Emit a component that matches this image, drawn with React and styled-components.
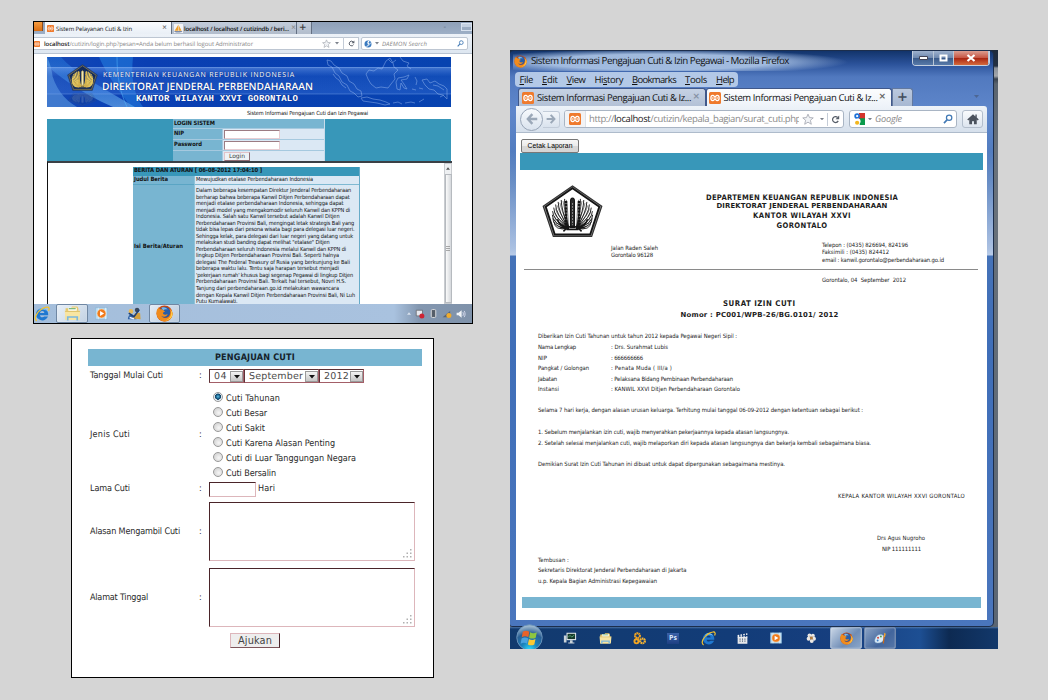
import React, { useLayoutEffect, useRef, useState } from "react";
import styled, { createGlobalStyle, css } from "styled-components";

const tahoma = `"DejaVu Sans Condensed", "DejaVu Sans", sans-serif`;
const verdana = `"DejaVu Sans", sans-serif`;
const segoe = `"Open Sans", "Noto Sans", sans-serif`;

const Global = createGlobalStyle`
  * { box-sizing: border-box; }
  html, body { margin: 0; background: #d5d5d5; }
  body { font-family: ${tahoma}; color: #111; text-rendering: geometricPrecision; }
`;

/* ---------- text that is tracked to an exact measure ---------- */
const FitSpan = styled.span`
  display: inline-block;
  flex: none;
  align-self: center;
  justify-self: start;
  white-space: pre;
  line-height: 1;
  padding-top: ${(p) => (p.$font ? 0 : "0.2em")};
  font-family: ${(p) => p.$font || "inherit"};
  font-size: ${(p) => (p.$size ? `${p.$size}px` : "inherit")};
  font-weight: ${(p) => (p.$bold ? 700 : p.$weight || "inherit")};
  font-style: ${(p) => (p.$italic ? "italic" : "inherit")};
  color: ${(p) => p.$color || "inherit"};
`;

function Fit({ w, children, ...rest }) {
  const ref = useRef(null);
  const [spacing, setSpacing] = useState(0);
  useLayoutEffect(() => {
    const el = ref.current;
    const count = el.textContent.length;
    setSpacing((w - el.getBoundingClientRect().width) / count);
  }, [w]);
  return (
    <FitSpan ref={ref} style={{ letterSpacing: `${spacing}px` }} {...rest}>
      {children}
    </FitSpan>
  );
}

/* ---------- desk ---------- */
const Desk = styled.main`
  display: flex;
  width: 1048px;
  height: 700px;
  background: #d5d5d5;
  overflow: hidden;
`;
const LeftColumn = styled.div`
  display: flex;
  flex-direction: column;
  width: 477px;
  padding: 21px 0 0 33px;
`;

/* ---------- icons ---------- */
const Svg = styled.svg`
  display: block;
  flex: none;
`;
const Icon = ({ s = 16, w, h, box = "0 0 16 16", children }) => (
  <Svg width={w || s} height={h || s} viewBox={box} fill="none">{children}</Svg>
);

const Xampp = ({ s }) => (
  <Icon s={s}>
    <rect width="16" height="16" rx="2" fill="#ef7a2d" />
    <path d="M5 4.500c2 0 2 2 3 2s1-2 3-2 2.500 1.500 2.500 3.500-1 3.500-2.500 3.500c-2 0-2-2-3-2s-1 2-3 2-2.500-1.500-2.500-3.500S3.500 4.500 5 4.500z" stroke="#fff" strokeWidth="1.700" />
    <path d="M5 7v2M11 7v2M6 8h4" stroke="#fff" strokeWidth="1.300" />
  </Icon>
);
const Firefox = ({ s }) => (
  <Icon s={s}>
    <circle cx="8" cy="8" r="7.500" fill="#c9470e" />
    <circle cx="8.300" cy="6.800" r="5.200" fill="#2a5ea8" />
    <path d="M5 2.500c3-1 5 0 6 2-2-1-4 0-4 1z" fill="#7db7e5" />
    <path d="M.8 5c.6-1.600 1.500-2 1.500-3 .8.800 1 1.500 1.700 2 1.500-.3 2.500.4 2.800 1L8.500 6 6.500 7.200c0 1.600 1.800 2.600 4.500 1.300-.8 3-4.500 3-6 1.500C7 13.800 13 13 13.500 7.500c.2-2-.5-3.500-1.200-4.500C15 4.500 16 7 15.500 9.500 14.500 13.500 11 16 7.500 15.500 2 15-.5 9.500.8 5z" fill="#f08b1d" />
    <path d="M13.800 5c1.500 4-.5 8.500-5 9.500 4-.2 7-3 6.600-6.700-.2-1.200-.8-2.200-1.600-2.800z" fill="#ffd04a" />
  </Icon>
);
const Explorer = ({ s }) => (
  <Icon s={s}>
    <path d="M1.500 3h5l1-1.500h5l1 1.500v11h-12z" fill="#e9c869" />
    <path d="M4 2.500h8v4H4z" fill="#fff" />
    <path d="M4.500 3.500H11" stroke="#61a85a" />
    <path d="M.7 5.500h14.600l-.7 8.500H1.400z" fill="#f8e5a2" />
    <path d="M1 6h14" stroke="#d4b353" strokeWidth=".7" />
    <path d="M3.500 14.500v-3.200h9v3.200" stroke="#7bb8de" strokeWidth="1.600" />
  </Icon>
);
const IE = ({ s }) => (
  <Icon s={s}>
    <path d="M14 10.500c-1 2.400-3.200 3.900-5.800 3.900A6.200 6.200 0 0 1 2 8.200C2 4.900 4.700 2.200 8.200 2.200c3.700 0 6.300 3 6 7H6c.2 1.400 1 2.100 2.300 2.100.9 0 1.500-.3 1.900-.8zM6 7h4.300C10.200 5.800 9.400 5.100 8.200 5.100S6.200 5.800 6 7z" fill="#1f78d0" />
    <path d="M4 3.900C5 3 6.500 2.300 8.200 2.300c2 0 3.800 1 4.800 2.600-2.500-1.500-6-1.500-9-1z" fill="#7cc6fb" />
    <path d="M2.800 14.800C-1 13 3 5.500 8.500 2.500c3-1.700 6-2 6.500-.5.300.8 0 1.800-.5 2.800" stroke="#f2c12e" strokeWidth="1.300" />
  </Icon>
);
const Player = ({ s }) => (
  <Icon s={s}>
    <path d="M.5 1h15v14h-15z" fill="#b9dbf2" stroke="#7faed0" strokeWidth=".6" />
    <path d="M4 1v14M13 1v14" stroke="#e6f4fc" />
    <circle cx="8" cy="8" r="5.400" fill="#f07a1b" stroke="#ffd6a6" strokeWidth=".7" />
    <path d="M6.200 5v6l5-3z" fill="#fff" />
  </Icon>
);
const Messenger = ({ s }) => (
  <Icon s={s}>
    <circle cx="4.500" cy="5" r="2.600" fill="#e9b955" />
    <path d="M1 14c0-5 3-6.500 6-5l4 5z" fill="#2f62a6" />
    <circle cx="11.500" cy="3.500" r="2.600" fill="#3b4a5c" />
    <path d="M7 13c0-5 3-7.500 8-6l.5 7z" fill="#d5a03b" />
    <path d="M2 7l6 4 6-8" stroke="#1e3f77" strokeWidth="1.800" />
    <path d="M3 12l5 1.500" stroke="#f5f5ff" strokeWidth="1.600" />
  </Icon>
);
const Monitor = ({ s }) => (
  <Icon s={s}>
    <path d="M4 2h11v8.500H4z" fill="#dfe6ea" />
    <path d="M5.200 3.200h8.600v6H5.200z" fill="#173a2c" />
    <path d="M6 7l2-2 2 2 3-2.500" stroke="#67c58c" strokeWidth=".8" />
    <path d="M1 5h3v8H1zM8 10.500h3V13H8zM6 13h7v1.300H6z" fill="#c9d3da" />
  </Icon>
);
const Gears = ({ s }) => (
  <Icon s={s}>
    <circle cx="5.500" cy="4.500" r="3" stroke="#f2a521" strokeWidth="2.600" strokeDasharray="2 .5" />
    <circle cx="4.300" cy="11.500" r="2.500" stroke="#f2a521" strokeWidth="2.400" />
    <circle cx="11.700" cy="11" r="2.900" stroke="#f7b532" strokeWidth="2.700" strokeDasharray="1.800 .5" />
  </Icon>
);
const PsTile = styled.div`
  display: grid;
  place-items: center;
  width: 12px;
  height: 11px;
  background: linear-gradient(#3b62a8, #1d3f82);
  color: #dbe9fb;
  font: 700 7px/1 "Open Sans", sans-serif;
`;
const Clapper = ({ s }) => (
  <Icon s={s}>
    <path d="M2 6h12v8.500H2z" fill="#e5e7eb" />
    <path d="M2 4.500l12-2M2 6h12" stroke="#f4f4f4" strokeWidth="1.800" strokeDasharray="2 1.500" />
    <path d="M5 8v5M8 8v5M11 8v5" stroke="#4a6177" strokeWidth="1.300" strokeDasharray="1.500 1" />
  </Icon>
);
const Flower = ({ s }) => (
  <Icon s={s}>
    <g fill="#ece9e4">
      <circle cx="6" cy="4.500" r="2.600" /><circle cx="10.500" cy="5" r="2.600" /><circle cx="12" cy="9" r="2.600" />
      <circle cx="9" cy="12" r="2.600" /><circle cx="4.800" cy="9" r="2.600" />
    </g>
    <circle cx="8.500" cy="8" r="2" fill="#b97f3c" />
    <path d="M6 5l1.500 2M11 5.500L9.500 7M11 10l-1.500-1" stroke="#8b6d4f" strokeWidth=".8" />
  </Icon>
);
const Paint = ({ s }) => (
  <Icon s={s}>
    <path d="M8 3c4 0 5 3 4 6s-4 5-8 4.500S.5 10 2 7s3.500-4 6-4z" fill="#dcecf8" stroke="#80a7ca" strokeWidth=".6" />
    <circle cx="5" cy="7" r="1.300" fill="#cf4a43" /><circle cx="8.500" cy="5.500" r="1.200" fill="#4c9a50" />
    <circle cx="4.500" cy="10.500" r="1.200" fill="#417fc7" />
    <path d="M11.500 14l1-9" stroke="#c96a1b" strokeWidth="1.500" /><path d="M12 6l.5-5 2 1-1 4z" fill="#f0a02c" />
  </Icon>
);
const Orb = () => (
  <Icon s={27} box="0 0 28 28">
    <defs>
      <radialGradient id="orb" cx=".5" cy="1" r=".95">
        <stop offset="0" stopColor="#2fe0ff" /><stop offset=".35" stopColor="#1a83bd" />
        <stop offset=".7" stopColor="#2a5f94" /><stop offset="1" stopColor="#9fb9cf" />
      </radialGradient>
    </defs>
    <circle cx="14" cy="14" r="13.200" fill="url(#orb)" stroke="#6a94bb" />
    <path d="M7 8c2-1.500 4.500-1.500 6.800 0l-1 5.700c-2-1.400-4.500-1.400-6.800 0z" fill="#e8632a" />
    <path d="M14.600 8.500c2.300 1.300 4.600 1.300 7 0l-1.200 5.700c-2.300 1.200-4.500 1.200-6.800 0z" fill="#8ec63f" />
    <path d="M5.800 15c2.300-1.300 4.500-1.300 6.800 0l-1 5.400c-2.300-1.400-4.500-1.400-6.800 0z" fill="#4aa3e0" />
    <path d="M13.400 15.500c2.300 1.300 4.500 1.300 6.800 0L19 21.200c-2.300 1.200-4.500 1.200-6.700 0z" fill="#fbc932" />
  </Icon>
);
const Star = ({ s }) => (
  <Icon s={s}><path d="M8 1.500l2 4.600 5 .4-3.800 3.200L12.400 15 8 12.200 3.600 15l1.200-5.300L1 6.500l5-.4z" fill="#f1f3f6" stroke="#a9adb5" strokeWidth="1.200" /></Icon>
);
const Caret = ({ s = 5, color = "#7c828c" }) => (
  <Icon w={s} h={s * 0.6} box="0 0 10 6"><path d="M0 0h10L5 6z" fill={color} /></Icon>
);
const Reload = ({ s }) => (
  <Icon s={s}>
    <path d="M12.800 10.500A5.300 5.300 0 1 1 11.500 4" stroke="#565d68" strokeWidth="2.200" />
    <path d="M14.500 1v6.500H8z" fill="#565d68" />
  </Icon>
);
const Magnifier = ({ s }) => (
  <Icon s={s}>
    <circle cx="9.800" cy="6" r="4.300" stroke="#4179b5" strokeWidth="2" />
    <path d="M6.500 9.300L1.500 14.500" stroke="#4179b5" strokeWidth="2.600" />
  </Icon>
);
const Home = ({ s }) => (
  <Icon s={s}><path d="M8 1.500L.3 8.600l1.500 1.300L3 8.800V15h3.700v-4h2.600v4H13V8.800l1.200 1.100 1.500-1.300-2.700-2.500V2h-1.800v2.500z" fill="#4b525d" /></Icon>
);
const Arrow = ({ s, flip }) => (
  <Icon s={s}>
    <path transform={flip ? "rotate(180 8 8)" : undefined} d="M8.500 1.500L2.500 8l6 6.500M3 8h12" stroke="#9ba8b8" strokeWidth="3.200" />
  </Icon>
);
const GoogleMark = ({ s }) => (
  <Icon s={s}>
    <path d="M0 0h16v16H0z" fill="#fff" />
    <path d="M8 0h8v10H8z" fill="#d4342b" /><path d="M9 7h7v9H9z" fill="#0b9a4b" />
    <circle cx="5.500" cy="4" r="3.800" fill="#1e72d8" /><circle cx="5.500" cy="4" r="1.500" fill="#fff" />
    <circle cx="6.500" cy="11" r="3.600" fill="#fff" /><circle cx="5.500" cy="13" r="2.800" fill="#f3b61d" />
  </Icon>
);
const Daemon = ({ s }) => (
  <Icon s={s}><circle cx="8" cy="8" r="7" fill="#3a7ac0" /><path d="M8 2l-2 5h2.500L6 14l5.500-8H8.800L11 2z" fill="#fff" /><path d="M1 13C6 14 14 9 15 3" stroke="#fff" strokeWidth="1.300" /></Icon>
);
const PhpMyAdmin = ({ s }) => (
  <Icon s={s}>
    <path d="M0 0h16v16H0z" fill="#f2f3f5" />
    <path d="M1 12L8 1v11zM9 3l4.500 9H9z" fill="#f0a12c" />
    <path d="M0 12.500h15c-1 2-3 2.500-5 2.500H4c-2 0-3-1-4-2.500z" fill="#7d8ba8" />
  </Icon>
);

/* pentagon crest; the colour version is for the web banner, the outlined one for letters */
const Crest = ({ w, h, colour }) => {
  const ink = colour ? "#c9a544" : "#151515";
  const feathers = [0, 1, 2, 3, 4, 5, 6, 7, 8];
  return (
    <Icon w={w} h={h} box="0 0 60 52">
      <path d="M30 1L59 21 49 51H11L1 21z" fill={colour ? "#152e62" : "#8d8d8d"} stroke={colour ? "#2c4474" : "#333"} strokeWidth="1.200" />
      <path d="M30 3.200L56.500 21.600 47.500 49h-35L3.500 21.600z" fill={colour ? "#132b5b" : "#fff"} stroke={ink} strokeWidth={colour ? 1 : 1.800} />
      {feathers.map((i) => {
        const a = Math.PI * (0.56 + i * 0.075);
        const x = 25 + Math.cos(a) * 15;
        const y = 29 - Math.sin(a) * 15.500;
        return (
          <g key={i} stroke={colour ? "#e4c65e" : ink} strokeWidth={colour ? 2.400 : 0.9}>
            <path d={`M26 43Q${x} ${y + 9} ${x} ${y}`} />
            <path d={`M34 43Q${60 - x} ${y + 9} ${60 - x} ${y}`} />
            {!colour && <path d={`M26 41Q${x + 3} ${y + 8} ${x + 1.800} ${y + 1}M34 41Q${57 - x} ${y + 8} ${58.200 - x} ${y + 1}`} strokeWidth=".5" />}
          </g>
        );
      })}
      <path d="M23.500 40V15M36.500 40V15" stroke={ink} strokeWidth="2.600" strokeDasharray="2.500 .6" />
      <path d="M28 42V16c0-4 4-4 4 0v26z" fill={colour ? "#f0e8b8" : "#2b2b2b"} stroke={ink} />
      {!colour && <path d="M30 18v22" stroke="#bbb" strokeWidth=".8" strokeDasharray="1.500 1.500" />}
      <path d="M15 34c2 6 7 9 15 7 8 2 13-1 15-7M18 42l6 1-3 3M42 42l-6 1 3 3M24 44h12" stroke={ink} strokeWidth="1.600" />
    </Icon>
  );
};

/* ---------- login window ---------- */
const LoginWindow = styled.section`
  width: 440px;
  height: 303px;
  border: 1px solid #000;
  background: #fff;
  display: flex;
  flex-direction: column;
  overflow: hidden;
`;
const SmallTabs = styled.div`
  display: flex;
  align-items: stretch;
  height: 12px;
  flex: none;
  background: linear-gradient(#8fa0b8, #9dafc6);
`;
const OrangeButton = styled.div`
  width: 9px;
  height: 9px;
  margin-right: 2px;
  background: linear-gradient(#f59b3f, #d86b10);
  border-right: 1px solid #8b4b1d;
`;
const SmallTab = styled.div`
  display: flex;
  align-items: center;
  justify-content: space-between;
  gap: 2px;
  width: ${(p) => p.$w}px;
  padding: 0 4px 0 2px;
  font: 6px ${segoe};
  background: ${(p) => (p.$on ? "linear-gradient(#fafcfe,#e9eff6)" : "linear-gradient(#c2ccda,#b2bdcc)")};
  border-right: 1px solid #647083;
`;
const TabTitle = styled.div`
  display: flex;
  align-items: center;
  gap: ${(p) => p.$gap || 2}px;
`;
const Close = styled.span`
  color: ${(p) => p.$color || "#666"};
  font: 600 ${(p) => p.$size || 8}px/1 ${verdana};
`;
const CornerHint = styled.div`
  display: flex;
  flex: 1;
  align-items: flex-start;
  justify-content: flex-end;
  gap: 15px;
  color: #56657a;
  font: 7px/10px ${verdana};
`;
const CornerButton = styled.div`
  width: 11px;
  height: 8px;
  margin-top: 1px;
  border: 1px solid #d8e2ef;
  background: linear-gradient(#c4d0e0 50%, #9bacc2 50%);
`;
const SmallNav = styled.div`
  display: flex;
  align-items: center;
  gap: 2px;
  height: 20px;
  flex: none;
  padding-right: 3px;
  background: linear-gradient(#edf2f8, #dde6f0);
  border-bottom: 1px solid #b8c3d1;
`;
const SmallField = styled.div`
  display: flex;
  align-items: center;
  gap: ${(p) => p.$gap || 3}px;
  height: 13px;
  width: ${(p) => p.$w}px;
  padding: 0 3px 0 ${(p) => p.$pl || 0}px;
  background: #fff;
  border: 1px solid #bdc6d2;
  border-left-width: ${(p) => (p.$open ? 0 : 1)}px;
  border-radius: ${(p) => (p.$open ? "0" : "2px")};
`;
const Host = styled.span`
  color: #1c1c1c;
  font-weight: ${(p) => p.$weight || 400};
`;
const Spring = styled.div`flex: 1;`;
const Separator = styled.div`
  flex: none;
  width: 1px;
  height: 13px;
  background: #c4ccd7;
`;

const SitePage = styled.div`
  flex: 1;
  min-height: 0;
  width: 418px;
  padding: 3px 0 0 13px;
  display: flex;
  flex-direction: column;
`;
const Banner = styled.header`
  position: relative;
  flex: none;
  width: 404px;
  height: 50px;
  overflow: hidden;
  display: flex;
`;
const BannerArt = styled.div`
  position: absolute;
  inset: 0;
`;
const BannerCrest = styled.div`
  position: relative;
  width: 55px;
  padding: 5px 0 0 20px;
`;
const Reflection = styled.div`
  transform: scaleY(-0.5);
  transform-origin: top;
  margin-top: 13px;
  opacity: 0.16;
`;
const BannerText = styled.div`
  position: relative;
  color: #fff;
  padding-top: 14px;
  display: flex;
  flex-direction: column;
`;
const BannerLine = styled.div`
  height: ${(p) => p.$h}px;
  padding-left: ${(p) => p.$pl || 0}px;
  display: flex;
  align-items: center;
  text-shadow: 0 0 1px #06226e;
`;
const Tagline = styled.div`
  display: flex;
  align-items: center;
  justify-content: flex-end;
  height: 12px;
  flex: none;
  padding-top: 2px;
  width: 321px;
`;
const LoginBand = styled.div`
  flex: none;
  display: grid;
  grid-template-columns: 126px 152px 126px;
  width: 404px;
  height: 42px;
  background: #3897b9;
`;
const LoginTable = styled.form`
  grid-column: 2;
  display: grid;
  grid-template-columns: 49px 1fr;
  grid-template-rows: 9px 10px 10px 10px;
  gap: 1px;
  margin: 0;
  background: #a5c9df;
  border-right: 1px solid #c9dceb;
`;
const LoginLabel = styled.div`
  display: flex;
  align-items: center;
  padding: 1px 0 0 1px;
  grid-column: ${(p) => (p.$wide ? "1 / 3" : "auto")};
  background: #78b5d1;
`;
const LoginCell = styled.div`
  display: flex;
  align-items: center;
  padding-left: 1px;
  background: #dbe8f4;
`;
const TinyInput = styled.div`
  width: 56px;
  height: 9px;
  background: #fff;
  border: 1px solid;
  border-color: #9c7c83 #e8cdd2 #e8cdd2 #9c7c83;
`;
const TinyButton = styled.button`
  width: 26px;
  height: 9px;
  margin: 0;
  padding: 0;
  display: flex;
  align-items: center;
  justify-content: center;
  background: #eef2f6;
  border: 1px solid;
  border-color: #e2c3c9 #8e6c74 #8e6c74 #e2c3c9;
  color: #444;
`;
const Frame = styled.div`
  flex: 1;
  min-height: 0;
  display: flex;
  width: 405px;
  border-top: 2px solid #3b4046;
  border-left: 1px solid #111;
  overflow: hidden;
`;
const NewsTable = styled.div`
  display: grid;
  grid-template-columns: 61px 165px;
  grid-template-rows: 9px 9px 1fr;
  width: 227px;
  margin: 4px 0 0 85px;
  border-right: 1px solid #66abc8;
`;
const NewsHead = styled.div`
  grid-column: 1 / 3;
  display: flex;
  align-items: center;
  padding-left: 1px;
  background: #3897b9;
`;
const NewsLabel = styled.div`
  display: flex;
  align-items: center;
  padding: ${(p) => (p.$down ? "5px 0 0 1px" : "0 0 0 1px")};
  background: #78b5d1;
  border-bottom: 1px solid #5aa5c4;
`;
const NewsCell = styled.div`
  display: flex;
  flex-direction: column;
  align-items: flex-start;
  padding: ${(p) => (p.$body ? "3px 0 0 1px" : "1px 0 0 1px")};
  background: #dbe8f4;
  border-bottom: 1px solid #7fb9d2;
  border-left: 1px solid #8fc3d9;
`;
const NewsLine = styled.div`
  height: ${(p) => p.$h || 6.540}px;
  flex: none;
  display: flex;
  align-items: center;
`;
const Scrollbar = styled.div`
  display: flex;
  flex-direction: column;
  align-items: center;
  gap: 1px;
  width: 8px;
  margin-left: auto;
  background: #eef0f2;
  border: 1px solid #c9ccd0;
  padding-top: 3px;
`;
const Thumb = styled.div`
  display: grid;
  place-items: center;
  flex: 1;
  width: 7px;
  margin-top: 3px;
  padding-top: 20px;
  border: 1px solid #b6babf;
  background: linear-gradient(90deg, #fafafa, #d5d8dc);
`;
const Taskbar = styled.footer`
  display: flex;
  align-items: stretch;
  flex: none;
  height: ${(p) => p.$h}px;
  background: ${(p) => p.$bg};
`;
const Slot = styled.div`
  display: grid;
  place-items: center;
  flex: none;
  width: ${(p) => p.$w}px;
  margin-left: ${(p) => p.$ml || 0}px;
  ${(p) =>
    p.$active &&
    css`
      border: 1px solid ${p.$edge || "#6f87a3"};
      border-radius: 2px;
      background: ${p.$active};
      box-shadow: inset 0 0 1px #fff;
    `}
`;
const OrbSlot = styled.div`
  flex: none;
  width: 28px;
  height: 25px;
  margin: -3px 0 0 6px;
`;
const Tray = styled.div`
  display: flex;
  align-items: center;
  gap: 4px;
  margin-left: auto;
  padding-right: 6px;
`;

const NEWS = [
  ["Dalam beberapa kesempatan Direktur Jenderal Perbendaharaan", 155],
  ["berharap bahwa beberapa Kanwil Ditjen Perbendaharaan dapat", 153.500],
  ["menjadi etalase perbendaharaan Indonesia, sehingga dapat", 147.500],
  ["menjadi model yang mengakomodir seluruh Kanwil dan KPPN di", 154],
  ["Indonesia. Salah satu Kanwil tersebut adalah Kanwil Ditjen", 143.500],
  ["Perbendaharaan Provinsi Bali, mengingat letak strategis Bali yang", 158],
  ["tidak bisa lepas dari pesona wisata bagi para delegasi luar negeri.", 158.500],
  ["Sehingga kelak, para delegasi dari luar negeri yang datang untuk", 157],
  ["melakukan studi banding dapat melihat \"etalase\" Ditjen", 133.500],
  ["Perbendaharaan seluruh Indonesia melalui Kanwil dan KPPN di", 150],
  ["lingkup Ditjen Perbendaharaan Provinsi Bali. Seperti halnya", 143],
  ["delegasi The Federal Treasury of Rusia yang berkunjung ke Bali", 154],
  ["beberapa waktu lalu. Tentu saja harapan tersebut menjadi", 143],
  ["'pekerjaan rumah' khusus bagi segenap Pegawai di lingkup Ditjen", 157],
  ["Perbendaharaan Provinsi Bali. Terkait hal tersebut, Novri H.S.", 150],
  ["Tanjung dari perbendaharaan.go.id melakukan wawancara", 143],
  ["dengan Kepala Kanwil Ditjen Perbendaharaan Provinsi Bali, Ni Luh", 159],
  ["Putu Kumalawati.", 41.500],
];

const BannerDrawing = () => (
  <Icon w={404} h={50} box="0 0 404 50">
    <defs>
      <linearGradient id="sky" x2="1" y2="0">
        <stop offset="0" stopColor="#1649b4" /><stop offset=".12" stopColor="#0d43b6" />
        <stop offset=".25" stopColor="#0a3fb3" /><stop offset="1" stopColor="#0743b0" />
      </linearGradient>
      <linearGradient id="ray" x2="0" y2="1">
        <stop offset="0" stopColor="#2a8ff0" stopOpacity=".5" /><stop offset="1" stopColor="#8fd6ff" stopOpacity=".8" />
      </linearGradient>
      <linearGradient id="band" x2="0" y2="1">
        <stop offset="0" stopColor="#9cc3ff" stopOpacity=".42" /><stop offset=".35" stopColor="#5b93ef" stopOpacity=".12" />
        <stop offset="1" stopColor="#4a84e8" stopOpacity=".28" />
      </linearGradient>
    </defs>
    <path d="M0 0h404v50H0z" fill="url(#sky)" />
    <path d="M0 0h14c14 16 40 30 74 50H66C34 36 12 20 0 8z" fill="url(#ray)" opacity=".6" />
    <path d="M0 50C10 34 6 12 0 0v50h30C16 42 8 30 4 14z" fill="#7fc4f5" opacity=".4" />
    <path d="M52 0h34C84 20 86 36 96 50H84C72 34 60 18 52 0z" fill="#2f9cf3" opacity=".4" />
    <path d="M70 0c0 20 3 35 10 50" stroke="#54b9ff" opacity=".5" />
    <path d="M0 10h404v27H0z" fill="url(#band)" />
    <path d="M0 10.500h404M0 37h404" stroke="#8fb6f2" strokeWidth=".6" opacity=".6" />
    <g stroke="#b9d4ff" strokeWidth=".7" opacity=".55" strokeLinejoin="round">
      <path d="M280 3l4 1 3 4 5 3 3 5 5 3 2 5 5 3 3 5 4 2 1 5-4 1-4-4-4-2-3-6-5-3-3-6-4-3-3-6-4-2z" />
      <path d="M286 17l3 4 3 2 3 5 4 3" />
      <path d="M314 41l6-1 6 2 7 1 6 2 4 2-5 1-8-2-7-1-7-1z" />
      <path d="M319 17l3-4 5 1 4-3 4 1 4-8 4-3 3 5 1 4 4 3-4 4 1 5-4 5-3 4-7-1-5 1-5-4-3-5z" />
      <path d="M349 25l2-4 6-1 5-2-2 4-6 1 3 4 3 5-3-1-3-5-1 7-3-1z" />
      <path d="M341 2l4 4 4-3M353 0l3 4 6 2-2 3 4 3" />
      <path d="M368 20l2 4-1 4M372 31l4 1M365 32l4 1" />
      <path d="M375 23l5-1 3 4 5-2 4 3 5 2 3 3v10l-4-4-5-1-4-4-5-1-4-4z" />
      <path d="M346 46l5-1 4 2M358 46l6-1 4 1M372 45l5-3" />
      <path d="M386 28l5 1 6 4M393 40l4-2" />
    </g>
  </Icon>
);

function LoginScreen() {
  return (
    <LoginWindow>
      <SmallTabs>
        <OrangeButton />
        <SmallTab $w={127} $on>
          <TabTitle><Xampp s={7} /><Fit w={76}>Sistem Pelayanan Cuti &amp; Izin</Fit></TabTitle>
          <Close $size={6}>×</Close>
        </SmallTab>
        <SmallTab $w={125}>
          <TabTitle $gap={1}><PhpMyAdmin s={9} /><Fit w={105} $weight={600}>localhost / localhost / cutizindb / beri...</Fit></TabTitle>
          <Close $size={6} $color="#888">×</Close>
        </SmallTab>
        <SmallTab $w={15}><Close $size={9} $color="#444">+</Close></SmallTab>
        <CornerHint><span>-</span><CornerButton /></CornerHint>
      </SmallTabs>
      <SmallNav>
        <SmallField $w={325} $open $gap={4}>
          <Xampp s={6} />
          <Fit w={209} $size={6} $font={segoe} $color="#888"><Host $weight={600}>localhost</Host>/cutizin/login.php?pesan=Anda belum berhasil logout Administrator</Fit>
          <Spring />
          <Star s={9} /><Caret s={4} /><Separator /><Reload s={7} />
        </SmallField>
        <SmallField $w={107} $pl={2}>
          <Daemon s={8} /><Caret s={4} /><Fit w={45} $size={6} $italic $font={segoe} $color="#888">DAEMON Search</Fit>
          <Spring />
          <Magnifier s={7} />
        </SmallField>
      </SmallNav>
      <SitePage>
        <Banner>
          <BannerArt><BannerDrawing /></BannerArt>
          <BannerCrest>
            <Crest w={31} h={31} colour />
            <Reflection><Crest w={31} h={26} colour /></Reflection>
          </BannerCrest>
          <BannerText>
            <BannerLine $h={9} $pl={1}><Fit w={192} $size={7} $font={`"Open Sans", sans-serif`}>KEMENTERIAN KEUANGAN REPUBLIK INDONESIA</Fit></BannerLine>
            <BannerLine $h={12}><Fit w={211} $size={10.200} $weight={600} $font={`"Open Sans", sans-serif`}>DIREKTORAT JENDERAL PERBENDAHARAAN</Fit></BannerLine>
            <BannerLine $h={14} $pl={34}><Fit w={162} $size={9} $bold $font={`"Liberation Mono", monospace`}>KANTOR WILAYAH XXVI GORONTALO</Fit></BannerLine>
          </BannerText>
        </Banner>
        <Tagline><Fit w={121} $size={5.600}>Sistem Informasi Pengajuan Cuti dan Izin Pegawai</Fit></Tagline>
        <LoginBand>
          <LoginTable>
            <LoginLabel $wide><Fit w={41} $size={5.800} $bold>LOGIN SISTEM</Fit></LoginLabel>
            <LoginLabel><Fit w={10} $size={5.800} $bold>NIP</Fit></LoginLabel>
            <LoginCell><TinyInput /></LoginCell>
            <LoginLabel><Fit w={28} $size={5.800} $bold>Password</Fit></LoginLabel>
            <LoginCell><TinyInput /></LoginCell>
            <LoginLabel />
            <LoginCell><TinyButton type="button"><Fit w={16} $size={6} $font={verdana}>Login</Fit></TinyButton></LoginCell>
          </LoginTable>
        </LoginBand>
        <Frame>
          <NewsTable>
            <NewsHead><Fit w={128} $size={5.800} $bold>BERITA DAN ATURAN [ 06-08-2012 17:04:10 ]</Fit></NewsHead>
            <NewsLabel><Fit w={34} $size={5.800} $bold>Judul Berita</Fit></NewsLabel>
            <NewsCell><NewsLine $h={7}><Fit w={117} $size={5.600}>Mewujudkan etalase Perbendaharaan Indonesia</Fit></NewsLine></NewsCell>
            <NewsLabel $down><Fit w={49} $size={5.800} $bold>Isi Berita/Aturan</Fit></NewsLabel>
            <NewsCell $body>
              {NEWS.map(([text, w]) => (
                <NewsLine key={text}><Fit w={w} $size={5.600}>{text}</Fit></NewsLine>
              ))}
            </NewsCell>
          </NewsTable>
          <Scrollbar><Icon w={4} h={3} box="0 0 10 6"><path d="M0 6h10L5 0z" fill="#555" /></Icon><Thumb><Icon w={4} h={5} box="0 0 4 5"><path d="M0 .5h4M0 2.500h4M0 4.500h4" stroke="#888" strokeWidth=".7" /></Icon></Thumb></Scrollbar>
        </Frame>
      </SitePage>
      <Taskbar $h={19} $bg="linear-gradient(90deg,#a4bedb 0,#a9c2df 360px,#8397b0 385px,#7f92aa 100%)">
        <Slot $w={14}><IE s={16} /></Slot>
        <Slot $w={32} $ml={8} $active="linear-gradient(135deg,#e8f0f8,#c3d2e3)"><Explorer s={17} /></Slot>
        <Slot $w={14} $ml={6}><Player s={13} /></Slot>
        <Slot $w={16} $ml={18}><Messenger s={14} /></Slot>
        <Slot $w={31} $ml={7} $active="linear-gradient(135deg,#e4ecf5,#b9cadd)"><Firefox s={17} /></Slot>
        <Tray>
          <Icon w={4} h={3} box="0 0 10 6"><path d="M0 6h10L5 0z" fill="#d8e2ee" /></Icon>
          <Icon s={10}><path d="M2 2h10v9H2z" fill="#e6e8ee" stroke="#555" /><circle cx="11" cy="11" r="4" fill="#cf2433" /></Icon>
          <Icon s={9}><rect x="4" y="1" width="8" height="14" rx="2" fill="#555e69" stroke="#eee" strokeWidth="1.500" /></Icon>
          <Icon s={10}><path d="M1 13L13 3v10z" fill="#596577" /><circle cx="11" cy="10.500" r="4" fill="#f0ac2e" /></Icon>
          <Icon s={10}><path d="M1 6h3l5-4v12l-5-4H1z" fill="#f1f4f7" /><path d="M11 5c1 2 1 4 0 6M13 3c2 3 2 7 0 10" stroke="#eef" strokeWidth="1.200" /></Icon>
        </Tray>
      </Taskbar>
    </LoginWindow>
  );
}

/* ---------- leave request form ---------- */
const FormPanel = styled.section`
  width: 363px;
  height: 340px;
  margin: 14px 0 0 38px;
  padding: 10px 11px 0 16px;
  border: 1px solid #000;
  background: #fff;
  display: flex;
  flex-direction: column;
  font-size: 9px;
  color: #2a2a2a;
`;
const FormTitle = styled.h1`
  display: flex;
  align-items: center;
  justify-content: center;
  height: 17px;
  margin: 0 0 1px;
  background: #78b5d1;
  color: #15222a;
`;
const FormRow = styled.div`
  display: grid;
  grid-template-columns: 109px 12px 1fr;
  align-items: center;
  height: ${(p) => p.$h}px;
  padding-left: 2px;
  margin-bottom: ${(p) => p.$mb || 0}px;
`;
const Colon = styled.span`
  line-height: 1;
  padding-top: 1px;
`;
const Controls = styled.div`
  display: flex;
  align-items: center;
  gap: ${(p) => p.$gap || 0}px;
  margin-left: -2px;
`;
const Sunken = css`
  border: 1px solid;
  border-color: #4a2429 #ddb6bb #ddb6bb #4a2429;
  background: #fff;
`;
const SelectBox = styled.div`
  display: flex;
  align-items: center;
  justify-content: space-between;
  width: ${(p) => p.$w}px;
  height: 14px;
  padding: 0 0 0 4px;
  border: 1px solid;
  border-color: #5c3237 #a35e67 #a35e67 #5c3237;
  color: #4b4b4b;
`;
const SelectButton = styled.span`
  display: grid;
  place-items: center;
  width: 13px;
  height: 11px;
  padding-top: 2px;
  border: 1px solid #9a9a9a;
  background: linear-gradient(#f4f4f4, #c6c6c6);
`;
const SelectText = styled.div`
  display: flex;
  padding-top: 2px;
`;
const RadioList = styled.div`
  display: flex;
  flex-direction: column;
  padding: 3px 0 0 2px;
`;
const RadioRow = styled.label`
  display: flex;
  align-items: center;
  gap: 3px;
  height: 15.050px;
`;
const Radio = styled.span`
  display: block;
  flex: none;
  width: 10px;
  height: 10px;
  margin-top: -3px;
  border-radius: 50%;
  border: 1px solid #999;
  background: ${(p) =>
    p.$on
      ? "radial-gradient(circle at 50% 45%, #5ac0e6 0, #12537e 2.200px, #12405f 2.900px, #e6eef4 3.300px)"
      : "radial-gradient(circle at 60% 60%, #f6f6f6, #c9c9c9)"};
`;
const TextInput = styled.div`
  width: 47px;
  height: 15px;
  ${Sunken}
`;
const TextArea = styled.div`
  display: flex;
  align-items: flex-end;
  justify-content: flex-end;
  width: 206px;
  height: 59px;
  padding: 0 2px 2px 0;
  ${Sunken}
`;
const SubmitRow = styled.div`
  padding: 6px 0 0 142px;
`;
const Submit = styled.button`
  display: flex;
  align-items: center;
  justify-content: center;
  width: 50px;
  height: 15px;
  margin: 0;
  padding: 1px 0 0;
  background: #eee;
  border: 1px solid;
  border-color: #ddb6bb #4a2429 #7d555a #ddb6bb;
  color: #444;
`;

const Grip = () => (
  <Icon s={9} box="0 0 9 9"><path d="M7 0h1.500v1.500H7zM7 3.500h1.500V5H7zM7 7h1.500v1.500H7zM3.500 3.500H5V5H3.500zM3.500 7H5v1.500H3.500zM0 7h1.500v1.500H0z" fill="#b0b0b0" /></Icon>
);
const Select = ({ w, tw, children }) => (
  <SelectBox $w={w}><SelectText><Fit w={tw} $size={9.500} $font={verdana}>{children}</Fit></SelectText><SelectButton><Caret s={6} color="#111" /></SelectButton></SelectBox>
);

const KINDS = [
  ["Cuti Tahunan", 54],
  ["Cuti Besar", 41],
  ["Cuti Sakit", 39],
  ["Cuti Karena Alasan Penting", 109],
  ["Cuti di Luar Tanggungan Negara", 130],
  ["Cuti Bersalin", 50],
];

function LeaveForm() {
  return (
    <FormPanel>
      <FormTitle><Fit w={80} $size={9} $bold>PENGAJUAN CUTI</Fit></FormTitle>
      <FormRow $h={18} $mb={3}>
        <Fit w={73}>Tanggal Mulai Cuti</Fit><Colon>:</Colon>
        <Controls><Select w={35} tw={13}>04</Select><Select w={75} tw={54}>September</Select><Select w={45} tw={25}>2012</Select></Controls>
      </FormRow>
      <FormRow $h={90} $mb={1}>
        <Fit w={40}>Jenis Cuti</Fit><Colon>:</Colon>
        <RadioList>
          {KINDS.map(([name, w], i) => (
            <RadioRow key={name}><Radio $on={i === 0} /><Fit w={w}>{name}</Fit></RadioRow>
          ))}
        </RadioList>
      </FormRow>
      <FormRow $h={20} $mb={3}>
        <Fit w={40}>Lama Cuti</Fit><Colon>:</Colon>
        <Controls $gap={2}><TextInput /><Fit w={17}>Hari</Fit></Controls>
      </FormRow>
      <FormRow $h={59} $mb={7}>
        <Fit w={90}>Alasan Mengambil Cuti</Fit><Colon>:</Colon>
        <Controls><TextArea><Grip /></TextArea></Controls>
      </FormRow>
      <FormRow $h={59}>
        <Fit w={58}>Alamat Tinggal</Fit><Colon>:</Colon>
        <Controls><TextArea><Grip /></TextArea></Controls>
      </FormRow>
      <SubmitRow><Submit type="button"><Fit w={34} $size={9.800} $font={verdana}>Ajukan</Fit></Submit></SubmitRow>
    </FormPanel>
  );
}

/* ---------- letter window ---------- */
const Screen = styled.section`
  display: flex;
  flex-direction: column;
  width: 488px;
  height: 599px;
  margin: 50px 0 0 33px;
  overflow: hidden;
  background: linear-gradient(180deg, #1d2a3c 0, #232f40 16px, #8b9199 18px, #a3a6aa 26px, #39424e 29px, #59636e 34px, #6a727b 100px, #5a6572 100%);
`;
const Glass = styled.div`
  display: flex;
  flex-direction: column;
  width: 484px;
  height: 577px;
  flex: none;
  padding: 0 6px 6px;
  border: 1px solid #1c2e4c;
  border-width: 1px 1px 1px 0;
  border-radius: 4px 5px 5px 3px;
  background:
    linear-gradient(180deg, transparent 0, transparent 100px, rgba(205, 219, 240, 0.75) 198px, rgba(214, 226, 244, 0.8) 204px, transparent 205px) 0 0 / 100% 205px no-repeat,
    linear-gradient(180deg, #12346b 0, #2b529a 13px, #5179bf 26px, #5f87cb 60px, #4a76b8 130px, #3f6eb8 300px, #4a76bd 100%);
`;
const TitleBar = styled.div`
  display: flex;
  align-items: center;
  height: 20px;
  flex: none;
  padding-left: 1px;
  margin: 0 -3px 0 -3px;
  background: radial-gradient(ellipse 190px 13px at 145px 11px, rgba(167, 192, 226, 0.95) 60%, transparent 100%);
`;
const TitleText = styled.div`
  display: flex;
  padding: 0 0 1px 4px;
`;
const WindowButtons = styled.div`
  display: flex;
  align-self: flex-start;
  margin-left: auto;
  height: 15px;
  border: 1px solid #c5d0df;
  border-top: 0;
  border-radius: 0 0 4px 4px;
  overflow: hidden;
`;
const WindowButton = styled.div`
  display: grid;
  place-items: center;
  width: ${(p) => p.$w}px;
  border-right: 1px solid #b9c6d6;
  background: ${(p) =>
    p.$red ? "linear-gradient(#dc9d90,#c65341 50%,#a92613 52%,#d46a3c)" : "linear-gradient(#9eb1cd,#6d87ae 50%,#3c5b8a 52%,#587aa9)"};
`;
const MenuBar = styled.nav`
  display: flex;
  align-items: center;
  gap: 9px;
  align-self: flex-start;
  height: 15px;
  width: 223px;
  margin: 1px 0 1px -1px;
  padding-left: 4.500px;
  border-radius: 4px;
  background: rgba(188, 207, 234, 0.92);
`;
const TabStrip = styled.div`
  display: flex;
  height: 18px;
  flex: none;
  padding-left: 2px;
`;
const Tab = styled.div`
  display: flex;
  align-items: center;
  justify-content: space-between;
  width: ${(p) => p.$w}px;
  padding: 0 5px 0 ${(p) => (p.$on ? 1.500 : 3)}px;
  border: 1px solid #40588a;
  border-bottom: 0;
  border-radius: 3px 3px 0 0;
  background: ${(p) => (p.$on ? "linear-gradient(#fcfdfe,#eef3f9)" : "linear-gradient(#c6d2e4,#b3c1d6)")};
`;
const NewTab = styled.div`
  display: grid;
  place-items: center;
  width: 21px;
  border: 1px solid #63799f;
  border-bottom: 0;
  border-radius: 0 3px 0 0;
  background: linear-gradient(#bac8de, #a7b8d2);
`;
const TabMenu = styled.div`
  margin: 7px 8px 0 auto;
`;
const NavBar = styled.div`
  display: flex;
  align-items: center;
  height: 27px;
  flex: none;
  padding: 0 4px 0 4px;
  background: linear-gradient(#eef3f9, #d6e0ec);
  border-bottom: 1px solid #aebbcb;
  border-radius: 0 3px 0 0;
`;
const BackButton = styled.div`
  display: grid;
  place-items: center;
  flex: none;
  width: 23px;
  height: 23px;
  border: 1px solid #98a5b7;
  border-radius: 50%;
  background: linear-gradient(#f7fafd, #dae3ee);
`;
const ForwardButton = styled.div`
  display: grid;
  place-items: center;
  flex: none;
  width: 17px;
  height: 17px;
  margin-right: 4px;
  border: 1px solid #c2ccd9;
  border-left: 0;
  border-radius: 0 3px 3px 0;
  background: linear-gradient(#f2f6fa, #dae3ee);
`;
const UrlField = styled.div`
  display: flex;
  align-items: center;
  flex: none;
  width: ${(p) => p.$w}px;
  height: 18px;
  margin-right: 5px;
  padding: 0 3px 0 ${(p) => p.$pl || 0}px;
  gap: 3px;
  border: 1px solid #a9b5c4;
  border-radius: 3px;
  background: #fff;
  overflow: hidden;
`;
const UrlText = styled.div`
  display: flex;
  flex: none;
  width: 210px;
  overflow: hidden;
`;
const SiteBadge = styled.div`
  display: grid;
  place-items: center;
  width: 21px;
  height: 16px;
  flex: none;
  border-right: 1px solid #dde2e8;
  background: #f2f3f5;
`;
const HomeButton = styled.div`
  display: grid;
  place-items: center;
  width: 22px;
  height: 18px;
  border: 1px solid #b3becc;
  border-radius: 3px;
  background: linear-gradient(#f9fbfd, #dde5ef);
`;
const Letter = styled.article`
  display: flex;
  flex-direction: column;
  flex: 1;
  min-height: 0;
  background: #fff;
  color: #1c1c1c;
`;
const PrintButton = styled.button`
  display: flex;
  align-items: center;
  justify-content: center;
  flex: none;
  width: 58px;
  height: 14px;
  margin: 6px 0 0 5px;
  padding: 0;
  border: 1px solid #777;
  border-radius: 2px;
  background: linear-gradient(#f6f6f6, #ebebeb 50%, #d8d8d8 52%, #d5d5d5);
`;
const TopBand = styled.div`
  flex: none;
  width: 463px;
  height: 17px;
  margin-left: 4px;
  background: #3897b9;
`;
const BottomBand = styled.div`
  flex: none;
  width: 459px;
  height: 11px;
  margin: 9px 0 0 6px;
  background: #78b5d1;
`;
const Letterhead = styled.header`
  display: grid;
  grid-template-columns: 95px 95px 1fr;
  flex: none;
  height: 100px;
  margin: 0 9px 0 8px;
  border-bottom: 1.500px solid #8a8a8a;
`;
const LogoCell = styled.div`
  padding: 15px 0 0 18px;
`;
const AddressCell = styled.div`
  padding-top: 75.500px;
  margin-left: -8px;
  display: flex;
  flex-direction: column;
`;
const OfficeCell = styled.div`
  display: flex;
  flex-direction: column;
  padding-top: 22.700px;
  margin-left: -8px;
`;
const OfficeLines = styled.div`
  display: flex;
  flex-direction: column;
  align-items: center;
  width: 192px;
  height: 49.500px;
`;
const Contact = styled.div`
  padding-left: 116px;
`;
const Line = styled.div`
  display: flex;
  align-items: center;
  flex: none;
  height: ${(p) => p.$h || 10.600}px;
  padding-left: ${(p) => p.$pl || 0}px;
  margin-top: ${(p) => p.$mt || 0}px;
`;
const LetterBody = styled.div`
  display: flex;
  flex-direction: column;
  padding: 11px 0 0 22px;
  font-size: 5.900px;
`;
const FieldName = styled.div`
  width: 73px;
  flex: none;
  display: flex;
`;

const Small = ({ w, children }) => <Fit w={w} $size={5.900}>{children}</Fit>;

const MENU = [
  ["", "F", "ile", 13.500],
  ["", "E", "dit", 15.500],
  ["", "V", "iew", 19],
  ["Hi", "s", "tory", 28.500],
  ["", "B", "ookmarks", 44],
  ["", "T", "ools", 22],
  ["", "H", "elp", 18],
];

const FIELDS = [
  ["Nama Lengkap", 38, ": Drs. Surahmat Lubis", 57],
  ["NIP", 9, ": 666666666", 32],
  ["Pangkat / Golongan", 51, ": Penata Muda ( III/a )", 61],
  ["Jabatan", 19, ": Pelaksana Bidang Pembinaan Perbendaharaan", 122],
  ["Instansi", 21, ": KANWIL XXVI Ditjen Perbendaharaan Gorontalo", 129],
];

function LetterScreen() {
  return (
    <Screen>
      <Glass>
        <TitleBar>
          <Firefox s={13} />
          <TitleText><Fit w={258} $size={9.800} $font={segoe}>Sistem Informasi Pengajuan Cuti &amp; Izin Pegawai - Mozilla Firefox</Fit></TitleText>
          <WindowButtons>
            <WindowButton $w={21}><Icon w={9} h={4} box="0 0 9 4"><path d="M.5.500h8v3h-8z" fill="#fff" stroke="#445" /></Icon></WindowButton>
            <WindowButton $w={20}><Icon w={9} h={8} box="0 0 9 8"><path d="M1.500 1.500h6v5h-6z" stroke="#fff" strokeWidth="2" /></Icon></WindowButton>
            <WindowButton $w={35} $red><Icon w={10} h={8} box="0 0 10 8"><path d="M1.500 1l7 6M8.500 1l-7 6" stroke="#fff" strokeWidth="2.200" /></Icon></WindowButton>
          </WindowButtons>
        </TitleBar>
        <MenuBar>
          {MENU.map(([lead, key, rest, w]) => (
            <Fit key={rest} w={w} $size={9.500} $font={segoe}>{lead}<u>{key}</u>{rest}</Fit>
          ))}
        </MenuBar>
        <TabStrip>
          <Tab $w={188}>
            <TabTitle $gap={3}><Xampp s={12} /><Fit w={154} $size={9.500} $font={segoe}>Sistem Informasi Pengajuan Cuti &amp; Iz...</Fit></TabTitle>
            <Close $size={9} $color="#8692a5">×</Close>
          </Tab>
          <Tab $w={186} $on>
            <TabTitle $gap={3}><Xampp s={12} /><Fit w={154} $size={9.500} $font={segoe}>Sistem Informasi Pengajuan Cuti &amp; Iz...</Fit></TabTitle>
            <Close $size={9}>×</Close>
          </Tab>
          <NewTab><Close $size={13} $color="#444e5e">+</Close></NewTab>
          <TabMenu><Caret s={5} color="#4c6693" /></TabMenu>
        </TabStrip>
        <NavBar>
          <BackButton><Arrow s={12} /></BackButton>
          <ForwardButton><Arrow s={10} flip /></ForwardButton>
          <UrlField $w={280}>
            <SiteBadge><Xampp s={12} /></SiteBadge>
            <UrlText><Fit w={212} $size={9.500} $font={segoe} $color="#8b8b8b">http://<Host>localhost</Host>/cutizin/kepala_bagian/surat_cuti.php</Fit></UrlText>
            <Star s={12} />
            <Spring />
            <Caret s={4} />
            <Separator />
            <Reload s={9} />
          </UrlField>
          <UrlField $w={108} $pl={3}>
            <GoogleMark s={12} /><Caret s={4} /><Fit w={27} $size={9.200} $italic $font={segoe} $color="#888">Google</Fit>
            <Spring />
            <Magnifier s={10} />
          </UrlField>
          <HomeButton><Home s={12} /></HomeButton>
        </NavBar>
        <Letter>
          <PrintButton type="button"><Fit w={45} $size={6.800} $font={`"Liberation Sans", sans-serif`}>Cetak Laporan</Fit></PrintButton>
          <TopBand />
          <Letterhead>
            <LogoCell><Crest w={61} h={52.500} /></LogoCell>
            <AddressCell>
              <Line $h={7.500}><Small w={47}>Jalan Raden Saleh</Small></Line>
              <Line $h={7.500}><Small w={42}>Gorontalo 96128</Small></Line>
            </AddressCell>
            <OfficeCell>
              <OfficeLines>
                <Line $h={9}><Fit w={192} $size={7.600} $bold>DEPARTEMEN KEUANGAN REPUBLIK INDONESIA</Fit></Line>
                <Line $h={9}><Fit w={171} $size={6.900} $bold $font={verdana}>DIREKTORAT JENDERAL PERBENDAHARAAN</Fit></Line>
                <Line $h={9.500}><Fit w={98} $size={7.600} $bold>KANTOR WILAYAH XXVI</Fit></Line>
                <Line $h={9.500}><Fit w={51} $size={7.600} $bold>GORONTALO</Fit></Line>
              </OfficeLines>
              <Contact>
                <Line $h={7.700}><Small w={86}>Telepon : (0435) 826694, 824196</Small></Line>
                <Line $h={7.700}><Small w={67}>Faksimili : (0435) 824412</Small></Line>
                <Line $h={7.700}><Small w={122}>email : kanwil.gorontalo@perbendaharaan.go.id</Small></Line>
              </Contact>
            </OfficeCell>
          </Letterhead>
          <Line $h={10} $mt={6.500} $pl={306}><Small w={84}>Gorontalo, 04  September  2012</Small></Line>
          <Line $h={12} $mt={10.500} $pl={207}><Fit w={72.500} $size={7.800} $bold>SURAT IZIN CUTI</Fit></Line>
          <Line $h={12} $mt={0.5} $pl={164.500}><Fit w={158} $size={6.900} $bold $font={verdana}>Nomor : PC001/WPB-26/BG.0101/ 2012</Fit></Line>
          <LetterBody>
            <Line><Small w={199}>Diberikan Izin Cuti Tahunan untuk tahun 2012 kepada Pegawai Negeri Sipil :</Small></Line>
            {FIELDS.map(([name, nw, value, vw]) => (
              <Line key={name}><FieldName><Small w={nw}>{name}</Small></FieldName><Small w={vw}>{value}</Small></Line>
            ))}
            <Line $mt={10.500}><Small w={325}>Selama 7 hari kerja, dengan alasan urusan keluarga. Terhitung mulai tanggal 06-09-2012 dengan ketentuan sebagai berikut :</Small></Line>
            <Line $mt={11}><Small w={251}>1. Sebelum menjalankan izin cuti, wajib menyerahkan pekerjaannya kepada atasan langsungnya.</Small></Line>
            <Line><Small w={333}>2. Setelah selesai menjalankan cuti, wajib melaporkan diri kepada atasan langsungnya dan bekerja kembali sebagaimana biasa.</Small></Line>
            <Line $mt={10.500}><Small w={247}>Demikian Surat Izin Cuti Tahunan ini dibuat untuk dapat dipergunakan sebagaimana mestinya.</Small></Line>
            <Line $mt={21.500} $pl={300}><Small w={127}>KEPALA KANTOR WILAYAH XXVI GORONTALO</Small></Line>
            <Line $mt={32} $pl={339}><Small w={48}>Drs Agus Nugroho</Small></Line>
            <Line $pl={344}><Small w={39}>NIP 111111111</Small></Line>
            <Line><Small w={31}>Tembusan :</Small></Line>
            <Line><Small w={148.500}>Sekretaris Direktorat Jenderal Perbendaharaan di Jakarta</Small></Line>
            <Line><Small w={119}>u.p. Kepala Bagian Administrasi Kepegawaian</Small></Line>
          </LetterBody>
          <BottomBand />
        </Letter>
      </Glass>
      <Taskbar $h={22} $bg="linear-gradient(180deg,rgba(90,130,180,.8) 0,rgba(20,50,100,0) 2px),linear-gradient(90deg,#123a6e 0,#123c78 45%,#173f80 70%,#1d4f93 84%,#0d2a52 90%,#12386b 100%)">
        <OrbSlot><Orb /></OrbSlot>
        <Slot $w={16} $ml={18}><Monitor s={14} /></Slot>
        <Slot $w={16} $ml={19}><Explorer s={13} /></Slot>
        <Slot $w={16} $ml={18}><Gears s={13} /></Slot>
        <Slot $w={16} $ml={18}><PsTile>Ps</PsTile></Slot>
        <Slot $w={16} $ml={19}><IE s={15} /></Slot>
        <Slot $w={16} $ml={18}><Clapper s={13} /></Slot>
        <Slot $w={16} $ml={18}><Player s={12} /></Slot>
        <Slot $w={16} $ml={19}><Flower s={12} /></Slot>
        <Slot $w={32} $ml={11} $edge="#9fb2cc" $active="linear-gradient(135deg,#c9d6e6,#6f8db6 60%,#8ba6c9)"><Firefox s={13} /></Slot>
        <Slot $w={32} $ml={2} $edge="#7189ad" $active="linear-gradient(135deg,#8ba3c5,#42659c 60%,#5677a8)"><Paint s={13} /></Slot>
      </Taskbar>
    </Screen>
  );
}

export default function App() {
  return (
    <>
      <Global />
      <Desk>
        <LeftColumn>
          <LoginScreen />
          <LeaveForm />
        </LeftColumn>
        <LetterScreen />
      </Desk>
    </>
  );
}
